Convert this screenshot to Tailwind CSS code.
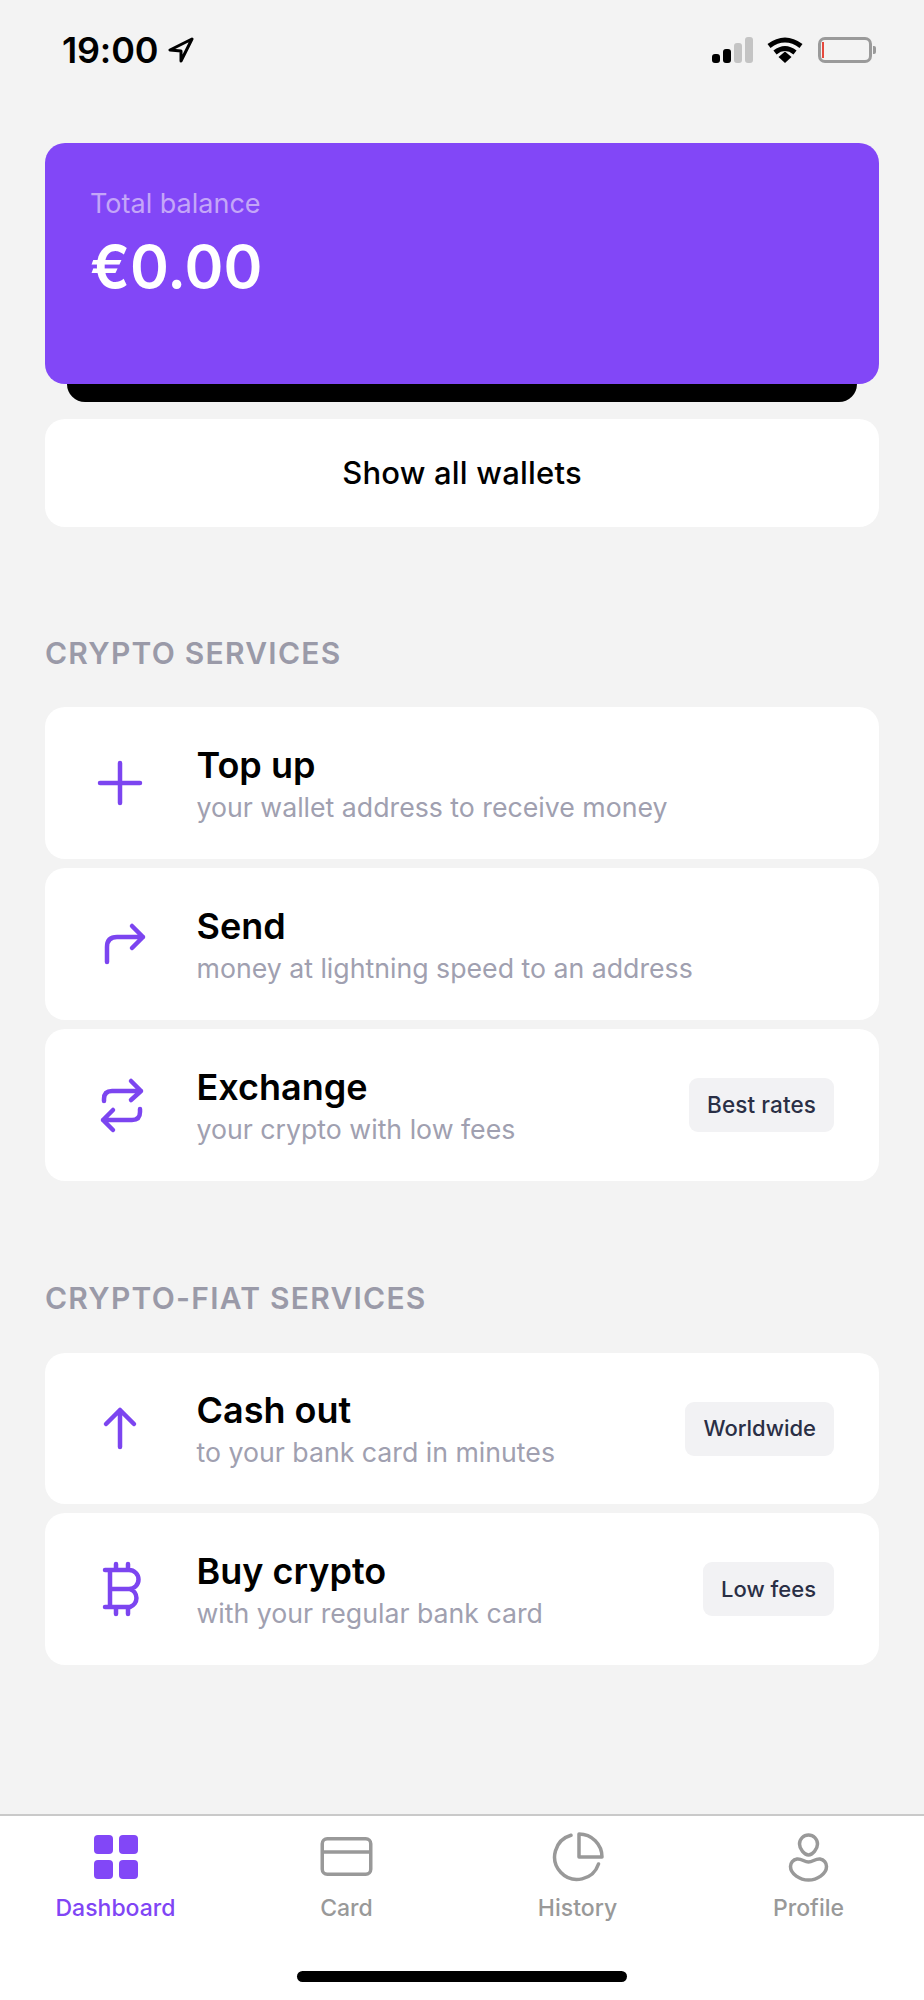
<!DOCTYPE html>
<html lang="en">
<head>
    <meta charset="UTF-8">
    <meta name="viewport" content="width=device-width, initial-scale=1.0">
    <title>Dashboard</title>
    <script src="https://cdn.jsdelivr.net/npm/@tailwindcss/browser@4"></script>
</head>
<body class="bg-[#f3f3f3] font-[Inter,sans-serif] text-black">
    <div class="h-[2000px] w-[924px] flex flex-col overflow-hidden">

        <!-- Status bar -->
        <div class="h-[143px] shrink-0 flex items-start justify-between pt-[37px] pl-[62px] pr-[52px]">
            <div class="flex items-center h-[26px] gap-[10px]">
                <span class="text-[36px] leading-[26px] font-semibold tracking-[-0.2px]">19:00</span>
                <svg width="26" height="26" viewBox="0 0 26 26" fill="none" stroke="black" stroke-width="3" stroke-linejoin="round"><path d="M24 2 L2 13 L13 14 L13 24 Z"/></svg>
            </div>
            <div class="flex items-center h-[26px]">
                <div class="flex items-end gap-[3px] h-[26px] mr-[14px]">
                    <div class="w-[8px] h-[9px] rounded-[3px] bg-black"></div>
                    <div class="w-[8px] h-[14px] rounded-[3px] bg-black"></div>
                    <div class="w-[8px] h-[20px] rounded-[3px] bg-[#c4c4c4]"></div>
                    <div class="w-[8px] h-[26px] rounded-[3px] bg-[#c4c4c4]"></div>
                </div>
                <svg width="36" height="26" viewBox="0 0 36 26" fill="none" class="mr-[15px]"><path d="M2 9 Q18 -3 34 9" stroke="black" stroke-width="5"/><path d="M8 15.5 Q18 7.5 28 15.5" stroke="black" stroke-width="5"/><path d="M11.5 20 L18 14.5 L24.5 20 L18 26 Z" fill="black"/></svg>
                <div class="relative w-[54px] h-[26px] rounded-[7px] border-[3px] border-[#9a9a9a] pl-[1px] py-[2px]">
                    <div class="w-[2px] h-[16px] bg-[#e5493e]"></div>
                    <div class="absolute left-[52px] top-[6px] w-[3px] h-[8px] rounded-r-[2px] bg-[#9a9a9a]"></div>
                </div>
            </div>
        </div>

        <main class="px-[45px] flex flex-col">
            <!-- Balance -->
            <section class="h-[241px] rounded-[20px] bg-[#8247f7] pt-[45px] pl-[45px]">
                <p class="text-[27px] leading-[32px] text-[#c4a6f8]">Total balance</p>
                <p class="text-[59px] leading-[74px] font-semibold text-white mt-[10px]">€0.00</p>
            </section>
            <div class="h-[18px] mx-[22px] rounded-b-[18px] bg-black"></div>
            <button class="h-[108px] mt-[17px] rounded-[20px] bg-white text-[31px] tracking-[0.2px] font-medium">Show all wallets</button>

            <h2 class="mt-[106px] text-[30px] leading-[40px] tracking-[1.25px] font-semibold text-[#9a9aa8]">CRYPTO SERVICES</h2>
            <div class="mt-[34px] flex flex-col gap-[9px]">
                <div class="h-[152px] rounded-[20px] bg-white flex items-center pl-[45px] pr-[45px]">
                    <svg class="w-[60px] h-[60px] shrink-0 mr-[46.5px]" viewBox="0 0 60 60" fill="none" stroke="#7c45f0" stroke-width="4.5" stroke-linecap="round" stroke-linejoin="round"><path d="M30 10 V50 M10 30 H50"/></svg>
                    <div class="flex-1 pt-[3px]">
                        <p class="text-[36px] leading-[42px] font-semibold">Top up</p>
                        <p class="mt-[2px] text-[26.7px] leading-[38px] text-[#a0a0b0]">your wallet address to receive money</p>
                    </div>
                </div>
                <div class="h-[152px] rounded-[20px] bg-white flex items-center pl-[45px] pr-[45px]">
                    <svg class="w-[60px] h-[60px] shrink-0 mr-[46.5px]" viewBox="0 0 60 60" fill="none" stroke="#7c45f0" stroke-width="4.5" stroke-linecap="round" stroke-linejoin="round"><path d="M17 48 V33 Q17 23 27 23 H53 M42 12 L53 23 L42 34"/></svg>
                    <div class="flex-1 pt-[3px]">
                        <p class="text-[36px] leading-[42px] font-semibold">Send</p>
                        <p class="mt-[2px] text-[26.7px] leading-[38px] text-[#a0a0b0]">money at lightning speed to an address</p>
                    </div>
                </div>
                <div class="h-[152px] rounded-[20px] bg-white flex items-center pl-[45px] pr-[45px]">
                    <svg class="w-[60px] h-[60px] shrink-0 mr-[46.5px]" viewBox="0 0 60 60" fill="none" stroke="#7c45f0" stroke-width="4.5" stroke-linecap="round" stroke-linejoin="round"><path d="M14 26 V24 Q14 16 22 16 H51 M41 6 L51 16 L41 25 M50 34 V37 Q50 45 42 45 H13 M23 35 L13 45 L23 55"/></svg>
                    <div class="flex-1 pt-[3px]">
                        <p class="text-[36px] leading-[42px] font-semibold">Exchange</p>
                        <p class="mt-[2px] text-[26.7px] leading-[38px] text-[#a0a0b0]">your crypto with low fees</p>
                    </div>
                    <span class="h-[54px] px-[18px] flex items-center rounded-[9px] bg-[#f2f2f4] text-[22.5px] tracking-[0.1px] font-medium text-[#2a2f45]">Best rates</span>
                </div>
            </div>

            <h2 class="mt-[97px] text-[30px] leading-[40px] tracking-[1.25px] font-semibold text-[#9a9aa8]">CRYPTO-FIAT SERVICES</h2>
            <div class="mt-[35px] flex flex-col gap-[9px]">
                <div class="h-[151px] rounded-[20px] bg-white flex items-center pl-[45px] pr-[45px]">
                    <svg class="w-[60px] h-[60px] shrink-0 mr-[46.5px]" viewBox="0 0 60 60" fill="none" stroke="#7c45f0" stroke-width="4.5" stroke-linecap="round" stroke-linejoin="round"><path d="M30 48 V11 M16 25 L30 11 L44 25"/></svg>
                    <div class="flex-1 pt-[3px]">
                        <p class="text-[36px] leading-[42px] font-semibold">Cash out</p>
                        <p class="mt-[2px] text-[26.7px] leading-[38px] text-[#a0a0b0]">to your bank card in minutes</p>
                    </div>
                    <span class="h-[54px] px-[18px] flex items-center rounded-[9px] bg-[#f2f2f4] text-[22px] font-medium text-[#2a2f45]">Worldwide</span>
                </div>
                <div class="h-[152px] rounded-[20px] bg-white flex items-center pl-[45px] pr-[45px]">
                    <svg class="w-[60px] h-[60px] shrink-0 mr-[46.5px]" viewBox="0 0 60 60" fill="none" stroke="#7c45f0" stroke-width="4.5" stroke-linecap="round" stroke-linejoin="round"><path d="M15 11 H39 A9.5 9.5 0 0 1 39 30 H20 M20 11 V48 M20 30 H40 A9.5 9.5 0 0 1 40 48 H15 M26 5 V11 M38 5 V11 M26 48 V55 M38 48 V55"/></svg>
                    <div class="flex-1 pt-[3px]">
                        <p class="text-[36px] leading-[42px] font-semibold">Buy crypto</p>
                        <p class="mt-[2px] text-[26.7px] leading-[38px] text-[#a0a0b0]">with your regular bank card</p>
                    </div>
                    <span class="h-[54px] px-[18px] flex items-center rounded-[9px] bg-[#f2f2f4] text-[22px] font-medium text-[#2a2f45]">Low fees</span>
                </div>
            </div>
        </main>

        <!-- Tab bar -->
        <nav class="relative mt-auto h-[186px] shrink-0 bg-white border-t-2 border-[#c9c9c9] grid grid-cols-4 pt-[16px] text-[23px] leading-[28px] font-medium text-[#999999]">
            <div class="flex flex-col items-center text-[#8045f5]">
                <div class="h-[50px] flex items-center">
                    <div class="grid grid-cols-2 gap-[6px]">
                        <div class="w-[19px] h-[19px] rounded-[4px] bg-[#8247f7]"></div>
                        <div class="w-[19px] h-[19px] rounded-[4px] bg-[#8247f7]"></div>
                        <div class="w-[19px] h-[19px] rounded-[4px] bg-[#8247f7]"></div>
                        <div class="w-[19px] h-[19px] rounded-[4px] bg-[#8247f7]"></div>
                    </div>
                </div>
                <span class="mt-[12px]">Dashboard</span>
            </div>
            <div class="flex flex-col items-center">
                <svg class="w-[60px] h-[50px]" viewBox="0 0 60 50" fill="none" stroke="#999999" stroke-width="3.5"><rect x="5.25" y="6.75" width="48.5" height="35.5" rx="5"/><path d="M5 20 H54"/></svg>
                <span class="mt-[12px]">Card</span>
            </div>
            <div class="flex flex-col items-center">
                <svg class="w-[60px] h-[50px]" viewBox="0 0 60 50" fill="none" stroke="#999999" stroke-width="3.5" stroke-linejoin="round" stroke-linecap="round"><path d="M23 3.3 A22.5 22.5 0 1 0 50.5 32"/><path d="M31 2 V25 H54 A23 23 0 0 0 31 2 Z"/></svg>
                <span class="mt-[12px]">History</span>
            </div>
            <div class="flex flex-col items-center">
                <svg class="w-[60px] h-[50px]" viewBox="0 0 60 50" fill="none" stroke="#999999" stroke-width="3.5" stroke-linejoin="round"><path d="M29.5 3 C24.5 3 20.5 7 20.5 12 C20.5 17 25.5 23 29.5 23 C33.5 23 38.5 17 38.5 12 C38.5 7 34.5 3 29.5 3 Z"/><path d="M29.5 30 C25 30 23 26.5 18 27 C14 27.5 11.5 31 11.5 34.5 C11.5 42 21 48 29.5 48 C38 48 47.5 42 47.5 34.5 C47.5 31 45 27.5 41 27 C36 26.5 34 30 29.5 30 Z"/></svg>
                <span class="mt-[12px]">Profile</span>
            </div>
            <div class="absolute left-[297px] bottom-[18px] w-[330px] h-[11px] rounded-full bg-black"></div>
        </nav>
    </div>
</body>
</html>
